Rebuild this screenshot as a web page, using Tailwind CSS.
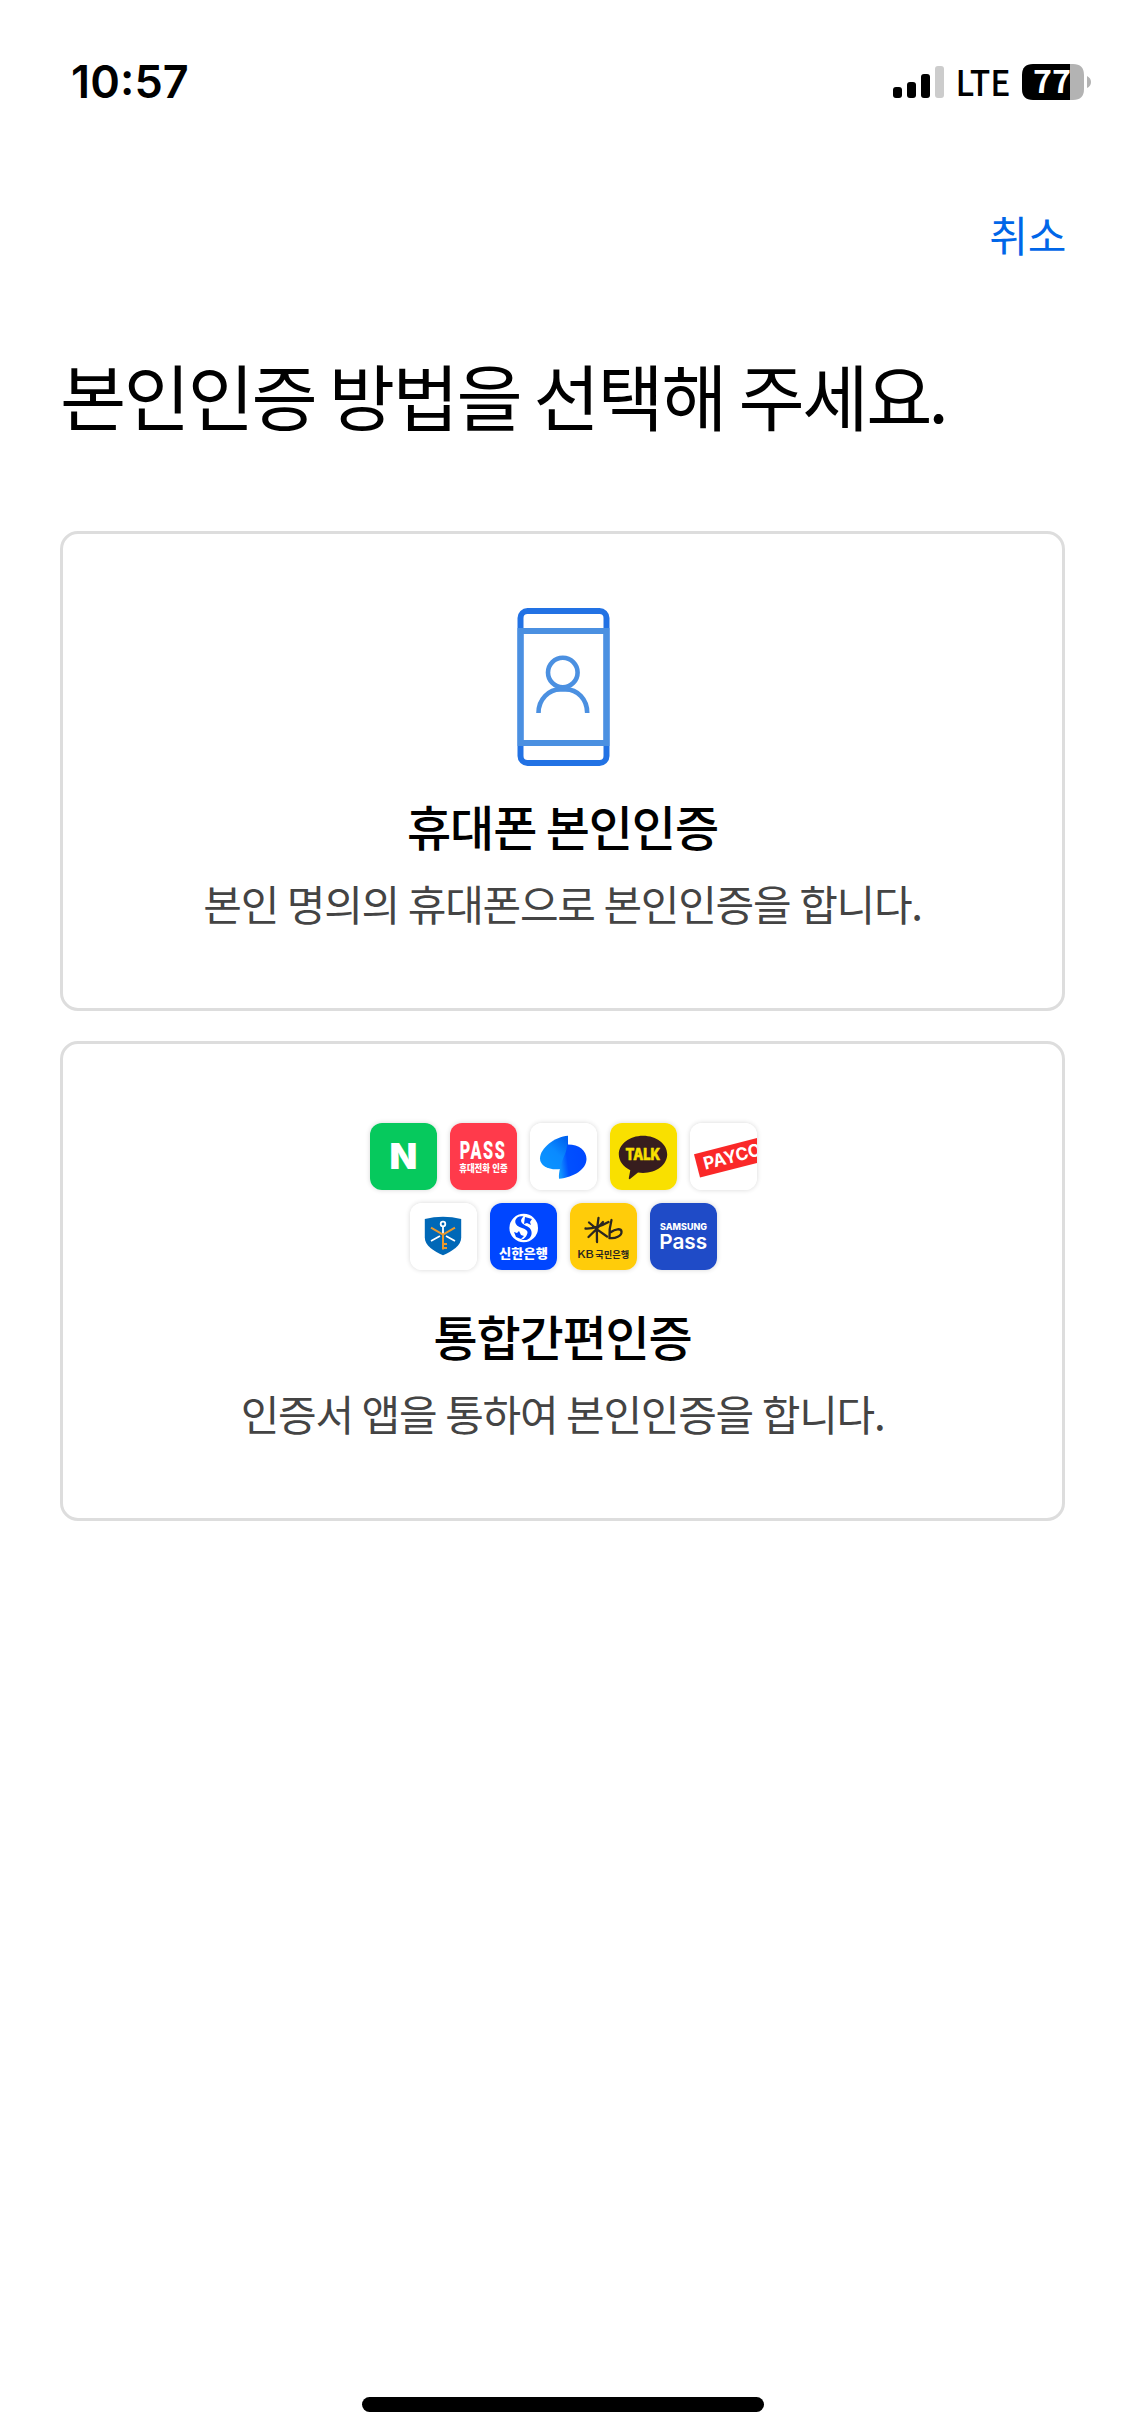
<!DOCTYPE html>
<html lang="ko">
<head>
<meta charset="utf-8">
<title>본인인증</title>
<script src="https://cdn.jsdelivr.net/npm/@tailwindcss/browser@4"></script>
</head>
<body class="bg-white">
<div class="flex h-[2436px] w-[1125px] flex-col overflow-hidden bg-white font-['Noto_Sans_CJK_KR',sans-serif] text-black">
  <!-- Status bar -->
  <header class="flex h-[164px] items-center justify-between pr-[34px] pl-[71px]">
    <div class="font-['Inter',sans-serif] text-[45px] leading-[60px] font-semibold tracking-[0.1px]">10<span class="relative -top-[3px]">:</span>57</div>
    <svg class="h-[64px] w-[200px]" viewBox="891 50 200 64">
      <rect x="893" y="87" width="9" height="11" rx="3"/>
      <rect x="907" y="82" width="9" height="16" rx="3"/>
      <rect x="921" y="74" width="9" height="24" rx="3"/>
      <rect x="935" y="66" width="9" height="32" rx="3" fill="#ccc"/>
      <text x="955.5" y="96" font-family="Noto Sans CJK KR, sans-serif" font-size="35" font-weight="500" textLength="55" lengthAdjust="spacingAndGlyphs">LTE</text>
      <path d="M1033 64h37v36h-37q-11 0-11-11V75q0-11 11-11z"/>
      <path d="M1070 64h3q11 0 11 11v14q0 11-11 11h-3zM1087 76q4 2 4 6t-4 6z" fill="#b3b3b3"/>
      <text x="1033" y="93" font-family="Noto Sans CJK KR, sans-serif" font-size="31" font-weight="700" fill="#fff" textLength="38" lengthAdjust="spacingAndGlyphs">77</text>
    </svg>
  </header>

  <main class="flex flex-col px-[60px]">
    <div class="flex h-[176px] justify-end pt-[38px]">
      <button class="-mr-px h-[63px] text-[42px] leading-[63px] tracking-[-0.3px] text-[#0066e8]">취소</button>
    </div>
    <h1 class="h-[108px] text-[72px] leading-[108px] tracking-[-2.4px] whitespace-nowrap [word-spacing:-4.4px]">본인인증 방법을 선택해 주세요<span class="-ml-[1.5px]">.</span></h1>

    <div class="mt-[83px] flex flex-col gap-[30px]">
      <section class="flex h-[480px] flex-col items-center rounded-[18px] border-[3px] border-[#ddd] pt-[73px]">
        <svg class="h-[160px] w-[94px]" viewBox="515.5 607 94 160" fill="none">
          <rect x="520" y="611" width="86" height="152" rx="7" stroke="#2272e4" stroke-width="6"/>
          <rect x="520" y="631" width="86" height="112" stroke="#4b90e1" stroke-width="6"/>
          <g stroke="#4b90e1" stroke-width="4.6"><circle cx="562.3" cy="672.5" r="14.8"/><path d="M538 713C538 699 548.700 689.4 559.700 689.4h5.4C576.700 689.4 586.700 699 586.700 713"/></g>
        </svg>
        <h2 class="mt-[22px] h-[72px] text-[48px] leading-[72px] font-medium tracking-[-1.1px] [word-spacing:-2.8px]">휴대폰 본인인증</h2>
        <p class="mt-[10px] h-[63px] text-[42px] leading-[63px] tracking-[-1.26px] text-[#444] [word-spacing:-1.7px]">본인 명의의 휴대폰으로 본인인증을 합니다.</p>
      </section>

      <section class="flex h-[480px] flex-col items-center rounded-[18px] border-[3px] border-[#ddd] pt-[79px]">
        <div class="flex w-[400px] flex-wrap justify-center gap-[13px] pl-px">
          <!-- Naver -->
          <svg class="h-[67px] w-[67px] rounded-[12px] shadow-[0_0_5px_rgba(0,0,0,0.16)]" viewBox="0 0 67 67">
            <rect width="67" height="67" fill="#06c95d"/>
            <text x="19.500" y="46" font-family="Inter, sans-serif" font-weight="900" font-size="35" fill="#fff" textLength="27.800" lengthAdjust="spacingAndGlyphs">N</text>
          </svg>
          <!-- PASS -->
          <svg class="h-[67px] w-[67px] rounded-[12px] shadow-[0_0_5px_rgba(0,0,0,0.16)]" viewBox="0 0 67 67">
            <rect width="67" height="67" fill="#ff3a4b"/>
            <text transform="translate(9.800 35.700) scale(.61 1)" font-family="Roboto, sans-serif" font-weight="900" font-size="26.500" fill="#fff" letter-spacing="2.600">PASS</text>
            <text x="9.200" y="48.900" font-family="Noto Sans CJK KR, sans-serif" font-weight="900" font-size="10" fill="#fff" textLength="48.500" lengthAdjust="spacingAndGlyphs">휴대전화 인증</text>
          </svg>
          <!-- Toss -->
          <svg class="h-[67px] w-[67px] rounded-[12px] shadow-[0_0_5px_rgba(0,0,0,0.16)]" viewBox="0 0 67 67">
            <defs>
              <linearGradient id="ta" x1="0.2" y1="1" x2="0.9" y2="0.1"><stop stop-color="#0a94ff"/><stop offset=".55" stop-color="#0a8aff"/><stop offset="1" stop-color="#0064f0"/></linearGradient>
              <linearGradient id="tb" x1="0" y1="0.6" x2="1" y2="0.4"><stop stop-color="#1196ff"/><stop offset=".3" stop-color="#0050ff"/><stop offset="1" stop-color="#0048ff"/></linearGradient>
            </defs>
            <rect width="67" height="67" fill="#fff"/>
            <path d="M38 12.700C25 13.500 10 25 10 35.500C10 43.500 20 47.500 30.500 46L38 37z" fill="url(#ta)"/>
            <path d="M38 21.500C49 21.500 56.500 27.500 56.500 36C56.500 46 44 54.500 29 55.700C28.500 49 31 40 35 31Q37.500 25 38 12.700z" fill="url(#tb)"/>
          </svg>
          <!-- KakaoTalk -->
          <svg class="h-[67px] w-[67px] rounded-[12px] shadow-[0_0_5px_rgba(0,0,0,0.16)]" viewBox="0 0 67 67">
            <rect width="67" height="67" fill="#f9e000"/>
            <path d="M33 12.700c13.500 0 24.200 8.300 24.200 18.600S46.500 50 33 50q-2.500 0-5-.4l-8 6.400q-1.500.6-1.200-1l1.500-7.800C13.400 44 8.800 38 8.800 31.300 8.800 21 19.500 12.700 33 12.700z" fill="#371d1e"/>
            <text x="15.600" y="37" font-family="Inter, sans-serif" font-weight="800" font-size="15.400" fill="#f9e000" stroke="#f9e000" stroke-width=".6" stroke-linejoin="round" textLength="34.600" lengthAdjust="spacingAndGlyphs">TALK</text>
          </svg>
          <!-- PAYCO -->
          <svg class="h-[67px] w-[67px] rounded-[12px] shadow-[0_0_5px_rgba(0,0,0,0.16)]" viewBox="0 0 67 67">
            <rect width="67" height="67" fill="#fff"/>
            <path d="M4 31.300L67 15v25L10 54.500z" fill="#fa2828"/>
            <text transform="translate(15.300 46.800) rotate(-14.500)" font-family="Inter, sans-serif" font-weight="700" font-size="17.500" fill="#fff" textLength="59" lengthAdjust="spacingAndGlyphs">PAYCO</text>
          </svg>
          <!-- Joint certificate -->
          <svg class="h-[67px] w-[67px] rounded-[12px] shadow-[0_0_5px_rgba(0,0,0,0.16)]" viewBox="0 0 67 67">
            <rect width="67" height="67" fill="#fff"/>
            <path d="M14.800 16Q33 11.500 51.200 16v18.500C51.200 43 42 48 33 52.300 24 48 14.800 43 14.800 34.500z" fill="#0068b7"/>
            <g fill="none" stroke-width="1.800" stroke="#fff"><circle cx="33" cy="21" r="2.300"/><path d="M33 23.500V31M21 38l9-5M45 38l-9-5"/></g>
            <path d="M21 24.700l12 7 12-7M33 31.500V46.500M33 41h4M33 45h4" fill="none" stroke="#e8982e" stroke-width="2"/>
          </svg>
          <!-- Shinhan -->
          <svg class="h-[67px] w-[67px] rounded-[12px] shadow-[0_0_5px_rgba(0,0,0,0.16)]" viewBox="0 0 67 67">
            <rect width="67" height="67" fill="#0046ff"/>
            <circle cx="33.700" cy="25" r="14.300" fill="#fff"/>
            <path d="M33.500 13.500C25 12 22 21 29.500 24C37 26.500 39.500 28 36 33.500Q34 36.500 31 36.500C42 40 45 27 37.500 23.500C31 20.500 29 18 33.500 13.500z" fill="#0046ff"/>
            <path d="M35 14l7 2-2 3 1 3-4-2-3 1zM24 29l3 1 2-2 2 4 3 1-3 3-5-2z" fill="#0046ff"/>
            <text x="9.100" y="54.800" font-family="Noto Sans CJK KR, sans-serif" font-weight="900" font-size="12.700" fill="#fff" textLength="48.800" lengthAdjust="spacingAndGlyphs">신한은행</text>
          </svg>
          <!-- KB -->
          <svg class="h-[67px] w-[67px] rounded-[12px] shadow-[0_0_5px_rgba(0,0,0,0.16)]" viewBox="0 0 67 67">
            <rect width="67" height="67" fill="#ffcc0a"/>
            <path d="M28.500 15Q26 27 27 39M15.500 25.500Q26 26 38.500 19M19 19.500Q27 27 37 33.500M33 19Q26 27 18.500 34M41.500 17Q39 26 39.500 35C45 36 52 33 51.500 28.500C51 25 45 26 41 29" fill="none" stroke="#2b2620" stroke-width="2.300" stroke-linecap="round"/>
            <text x="6.900" y="54.800" font-family="Noto Sans CJK KR, sans-serif" font-weight="500" font-size="10.200" fill="#2b2620" textLength="17" lengthAdjust="spacingAndGlyphs">KB</text>
            <text x="25.300" y="54.600" font-family="Noto Sans CJK KR, sans-serif" font-weight="700" font-size="9.200" fill="#2b2620" textLength="33.800" lengthAdjust="spacingAndGlyphs">국민은행</text>
          </svg>
          <!-- Samsung Pass -->
          <svg class="h-[67px] w-[67px] rounded-[12px] shadow-[0_0_5px_rgba(0,0,0,0.16)]" viewBox="0 0 67 67">
            <rect width="67" height="67" fill="#1f4bc7"/>
            <text x="10" y="27.300" font-family="Inter, sans-serif" font-weight="800" font-size="9" fill="#fff" textLength="47" lengthAdjust="spacingAndGlyphs">SAMSUNG</text>
            <text x="9.200" y="46.200" font-family="Inter, sans-serif" font-weight="600" font-size="20.500" fill="#fff" textLength="48" lengthAdjust="spacingAndGlyphs">Pass</text>
          </svg>
        </div>
        <h2 class="mt-[29px] h-[72px] text-[48px] leading-[72px] font-medium tracking-[-1.2px]">통합간편인증</h2>
        <p class="mt-[10px] h-[63px] text-[42px] leading-[63px] tracking-[-1.26px] text-[#444] [word-spacing:-1.7px]">인증서 앱을 통하여 본인인증을 합니다.</p>
      </section>
    </div>
  </main>

  <!-- Home indicator -->
  <div class="mt-auto mb-[24px] h-[15px] w-[402px] self-center rounded-full bg-black"></div>
</div>
</body>
</html>
